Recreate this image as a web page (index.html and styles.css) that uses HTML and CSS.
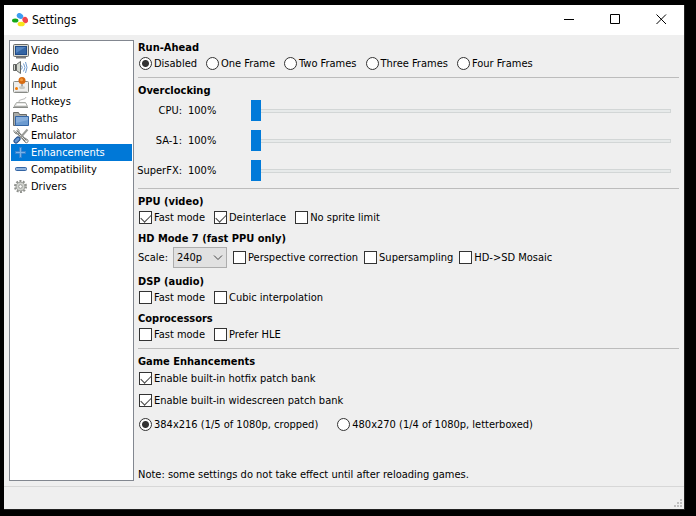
FILE: index.html
```html
<!DOCTYPE html>
<html lang="en">
<head>
    <meta charset="UTF-8">
    <meta name="viewport" content="width=device-width, initial-scale=1.0">
    <title>Settings</title>
    <link rel="stylesheet" href="styles.css">
</head>
<body>
<div class="window">
    <header class="titlebar">
        <svg class="logo" width="16" height="14" viewBox="0 0 16 14">
            <ellipse cx="8" cy="3" rx="3.4" ry="2.7" fill="#3d9df2" transform="rotate(30 8 3)"/>
            <ellipse cx="3.2" cy="7.5" rx="3.2" ry="2" fill="#14a818"/>
            <ellipse cx="13.2" cy="7" rx="2.7" ry="3.200" fill="#f2454d" transform="rotate(-25 13.2 7)"/>
            <ellipse cx="9.2" cy="11" rx="3.6" ry="2.3" fill="#f7e51c"/>
        </svg>
        <h1>Settings</h1>
        <div class="window-buttons">
            <button aria-label="Minimize"><svg width="11" height="11"><path d="M0 5.5h10"/></svg></button>
            <button aria-label="Maximize"><svg width="11" height="11"><path d="M.5 .5h9v9h-9z"/></svg></button>
            <button aria-label="Close"><svg width="11" height="11"><path d="M.5 .5l9.500 9.500M10 .5l-9.500 9.500"/></svg></button>
        </div>
    </header>

    <div class="content">
        <nav class="sidebar">
            <a href="#video">
                <svg width="16" height="16"><rect x=".5" y="1.500" width="15" height="12" rx="1" fill="#d8d8d0" stroke="#696b68"/><rect x="2.500" y="3.500" width="11" height="8" fill="#3465a4" stroke="#204a87"/><path d="M3 4h10L3 10z" fill="#5585bf"/><path d="M3 14.500h10" stroke="#77797a" stroke-width="2"/></svg>
                Video
            </a>
            <a href="#audio">
                <svg width="16" height="16" fill="none"><path d="M.5 4.500h3v6h-3zM3.500 4.500l4-3v12l-4-3z" fill="#d3d7cf" stroke="#666967"/><path d="M2.500 5v5" stroke="#555"/><path d="M8.500 5.500q1.500 2 0 4M10.500 3.500q3 4 0 8M12.500 2q3 5.500 0 11" stroke="#6f9bcf"/></svg>
                Audio
            </a>
            <a href="#input">
                <svg width="16" height="16"><rect x=".5" y="4.500" width="15" height="11" rx="1" fill="#eeeeec" stroke="#888a85"/><path d="M9 5v6" stroke="#aaa" stroke-width="2"/><ellipse cx="9" cy="10.500" rx="3" ry="1.500" fill="#c7c9c4"/><circle cx="9" cy="3.500" r="3.500" fill="#d76b10"/><circle cx="8.500" cy="2.800" r="1.500" fill="#f39a3c"/><circle cx="3.500" cy="11.500" r="1.500" fill="#f57900"/><path d="M2 14.500h12" stroke="#ccc"/></svg>
                Input
            </a>
            <a href="#hotkeys">
                <svg width="16" height="16" fill="none"><path d="M3.500 8.500h9l2 4H1z" fill="#e8e8e6" stroke="#aaaca8"/><path d="M0 13.500h15" stroke="#8a8c89"/><path d="M4 10.500h9" stroke="#fff"/><path d="M6 8q-1-2 3-2.500T13 3" stroke="#bbb"/></svg>
                Hotkeys
            </a>
            <a href="#paths">
                <svg width="16" height="16"><path d="M.5 14.500v-13h5l1 2h7v11z" fill="#a9aba8" stroke="#696b68"/><path d="M2.500 5.500h13v9h-13z" fill="#6c9bd0" stroke="#3465a4"/><path d="M3 6h12v3L3 12z" fill="#87aedb"/></svg>
                Paths
            </a>
            <a href="#emulator">
                <svg width="16" height="16" fill="none"><path d="M3 3l10 10" stroke="#777975" stroke-width="3"/><path d="M3 3l10 10" stroke="#e2e3e0"/><path d="M1 2v2l2 2 3-1V2L4 .500M10 12l3 3 2-1v-2l-3-2" stroke="#8b8d89"/><path d="M14.500 1.500L7 10" stroke="#9a9c98" stroke-width="2"/><path d="M5 11l-2 2" stroke="#204a87" stroke-width="5" stroke-linecap="round"/><path d="M5 11l-2 2" stroke="#6696cf" stroke-width="3" stroke-linecap="round"/></svg>
                Emulator
            </a>
            <a href="#enhancements" class="selected">
                <svg width="16" height="16"><path d="M6.500 2.500h2v4h4v2h-4v4h-2v-4h-4v-2h4z" fill="#7ab3e8" stroke="#3a82ce"/></svg>
                Enhancements
            </a>
            <a href="#compatibility">
                <svg width="16" height="16"><rect x="2.500" y="5.500" width="11" height="3" rx="1" fill="#8eb2dc" stroke="#3465a4"/></svg>
                Compatibility
            </a>
            <a href="#drivers">
                <svg width="16" height="16" fill="none"><circle cx="7.500" cy="7.500" r="5.500" stroke="#8f918d" stroke-width="2" stroke-dasharray="2 1.456"/><circle cx="7.500" cy="7.500" r="4.400" fill="#d0d2ce" stroke="#999b97"/><circle cx="7.500" cy="7.500" r="1.800" fill="#fff" stroke="#999b97"/></svg>
                Drivers
            </a>
        </nav>

        <main class="panel">
            <section>
                <h2>Run-Ahead</h2>
                <div class="options">
                    <label><input type="radio" name="frames" checked>Disabled</label>
                    <label><input type="radio" name="frames">One Frame</label>
                    <label><input type="radio" name="frames">Two Frames</label>
                    <label><input type="radio" name="frames">Three Frames</label>
                    <label><input type="radio" name="frames">Four Frames</label>
                </div>
            </section>
            <hr>
            <section>
                <h2>Overclocking</h2>
                <div class="sliders">
                    <label for="cpu">CPU:</label><output for="cpu">100%</output><input type="range" id="cpu" min="100" max="400" value="100">
                    <label for="sa1">SA-1:</label><output for="sa1">100%</output><input type="range" id="sa1" min="100" max="400" value="100">
                    <label for="sfx">SuperFX:</label><output for="sfx">100%</output><input type="range" id="sfx" min="100" max="400" value="100">
                </div>
            </section>
            <hr>
            <section>
                <h2>PPU (video)</h2>
                <div class="options">
                    <label><input type="checkbox" checked>Fast mode</label>
                    <label><input type="checkbox" checked>Deinterlace</label>
                    <label><input type="checkbox">No sprite limit</label>
                </div>
            </section>
            <section>
                <h2>HD Mode 7 (fast PPU only)</h2>
                <div class="options scale-row">
                    <div class="scale">
                        <label for="scale">Scale:</label>
                        <select id="scale">
                            <option>240p</option>
                            <option>480p</option>
                            <option>720p</option>
                        </select>
                    </div>
                    <label><input type="checkbox">Perspective correction</label>
                    <label><input type="checkbox">Supersampling</label>
                    <label><input type="checkbox">HD-&gt;SD Mosaic</label>
                </div>
            </section>
            <section>
                <h2>DSP (audio)</h2>
                <div class="options">
                    <label><input type="checkbox">Fast mode</label>
                    <label><input type="checkbox">Cubic interpolation</label>
                </div>
            </section>
            <section>
                <h2>Coprocessors</h2>
                <div class="options">
                    <label><input type="checkbox">Fast mode</label>
                    <label><input type="checkbox">Prefer HLE</label>
                </div>
            </section>
            <hr>
            <section class="game">
                <h2>Game Enhancements</h2>
                <label><input type="checkbox" checked>Enable built-in hotfix patch bank</label>
                <label><input type="checkbox" checked>Enable built-in widescreen patch bank</label>
                <div class="options resolutions">
                    <label><input type="radio" name="size" checked>384x216 (1/5 of 1080p, cropped)</label>
                    <label><input type="radio" name="size">480x270 (1/4 of 1080p, letterboxed)</label>
                </div>
            </section>
            <p class="note">Note: some settings do not take effect until after reloading games.</p>
        </main>
    </div>

    <footer class="statusbar">
        <svg width="8" height="8" fill="#bfbfbf"><path d="M6 0h2v2H6zM3 3h2v2H3zM6 3h2v2H6zM0 6h2v2H0zM3 6h2v2H3zM6 6h2v2H6z"/></svg>
    </footer>
</div>
</body>
</html>
```
FILE: styles.css
```css
* {
    box-sizing: border-box;
}

body {
    display: flex;
    min-height: 100vh;
    margin: 0;
    padding: 5px 11px 6px 4px;
    background: #000;
    color: #000;
    font: 11px/14px "DejaVu Sans Condensed", Tahoma, sans-serif;
}

.window {
    display: flex;
    flex-direction: column;
    flex: 1;
    background: #efefef;
    border-right: 1px solid #222;
    border-bottom: 1px solid #222;
}

/* Title bar */
.titlebar {
    display: flex;
    align-items: center;
    height: 30px;
    padding-left: 8px;
    background: #fff;
}

.titlebar h1 {
    flex: 1;
    margin: 0 0 0 4px;
    font-size: 12px;
    font-weight: normal;
}

.window-buttons {
    display: flex;
}

.window-buttons button {
    display: flex;
    align-items: center;
    justify-content: center;
    width: 46px;
    height: 30px;
    padding: 0 0 1px;
    border: none;
    background: none;
}

.window-buttons path {
    fill: none;
    stroke: #000;
}

.content {
    display: flex;
    flex: 1;
    gap: 4px;
    padding: 5px;
}

/* Page list */
.sidebar {
    width: 125px;
    padding: 1px;
    background: #fff;
    border: 1px solid #828790;
}

.sidebar a {
    display: flex;
    align-items: center;
    gap: 2px;
    height: 17px;
    padding: 1px 0 0 2px;
    color: #000;
    text-decoration: none;
}

.sidebar a.selected {
    background: #0078d7;
    color: #fff;
}

/* Settings */
.panel {
    display: flex;
    flex-direction: column;
    flex: 1;
}

.panel h2 {
    margin: 0;
    font-size: 11px;
    line-height: 16px;
    font-weight: bold;
}

.panel hr {
    width: 100%;
    height: 1px;
    margin: 6px 0 5px;
    border: none;
    background: #bcbcbc;
}

section + section {
    margin-top: 6px;
}

.options {
    display: flex;
    gap: 8px;
}

.panel label {
    display: flex;
    align-items: center;
    gap: 2px;
    height: 15px;
    white-space: nowrap;
}

input[type="radio"],
input[type="checkbox"] {
    appearance: none;
    width: 13px;
    height: 13px;
    margin: 0 0 0 1px;
    border: 1px solid #333;
    background: #fff;
}

input[type="radio"] {
    border-radius: 50%;
}

input[type="radio"]:checked {
    background: radial-gradient(circle, #333 3px, #fff 4px);
}

input[type="checkbox"]:checked::before {
    content: "";
    display: block;
    width: 9px;
    height: 5px;
    margin: 2px 1px;
    border-left: 1px solid #444;
    border-bottom: 1px solid #444;
    transform: rotate(-45deg);
}

.sliders {
    display: grid;
    grid-template-columns: 44px 57px 1fr;
    align-items: center;
    column-gap: 6px;
    row-gap: 9px;
    padding: 1px 8px 1px 0;
}

.sliders label {
    justify-content: flex-end;
}

input[type="range"] {
    appearance: none;
    width: 100%;
    height: 21px;
    margin: 0;
    background: none;
}

input[type="range"]::-webkit-slider-runnable-track {
    height: 4px;
    border: 1px solid #d2d6d6;
    background: #e7eaea;
}

input[type="range"]::-webkit-slider-thumb {
    appearance: none;
    width: 10px;
    height: 21px;
    margin: -10px 0 0 -1px;
    background: #007ad9;
}

.scale-row {
    align-items: center;
    gap: 5px;
}

.scale {
    display: flex;
    align-items: center;
    gap: 5px;
}

select {
    appearance: none;
    width: 54px;
    height: 21px;
    padding: 0 3px;
    border: 1px solid #adadad;
    border-radius: 0;
    background: #e1e1e1 url("data:image/svg+xml,%3Csvg xmlns='http://www.w3.org/2000/svg' width='10' height='6' fill='none' stroke='%23444'%3E%3Cpath d='M1 .5l4 4 4-4'/%3E%3C/svg%3E") no-repeat right 3px center;
    color: #000;
    font: inherit;
}

.game label {
    margin-top: 1px;
}

.game label + label {
    margin-top: 7px;
}

.resolutions {
    gap: 18px;
    margin-top: 9px;
}

.resolutions label,
.resolutions label + label {
    margin-top: 0;
}

.note {
    margin: auto 0 0;
    line-height: 12px;
}

/* Status bar */
.statusbar {
    display: flex;
    align-items: flex-end;
    justify-content: flex-end;
    height: 23px;
    padding: 2px;
    border-top: 1px solid #d7d7d7;
}
```
